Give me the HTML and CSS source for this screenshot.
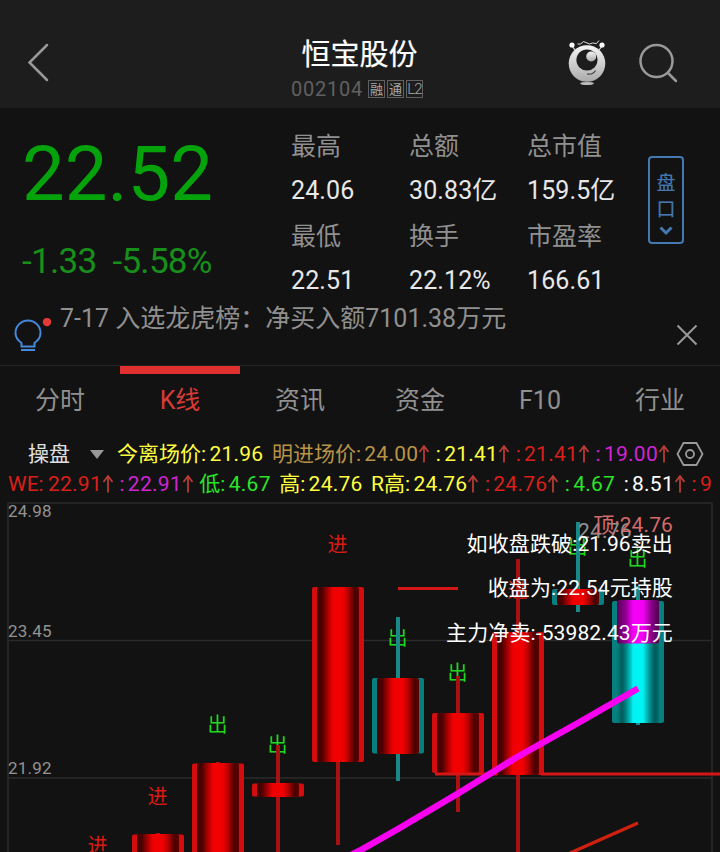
FILE: index.html
```html
<!DOCTYPE html>
<html lang="zh-CN">
<head>
<meta charset="utf-8">
<title>恒宝股份</title>
<link rel="stylesheet" href="styles.css">
</head>
<body>
<svg width="0" height="0" class="defs"><symbol id="up" viewBox="0 0 12 18"><path d="M6 17.500V1M1.500 7 6 1l4.500 6"/></symbol></svg>
<header class="top">
  <svg class="back" width="24" height="42" viewBox="0 0 24 42"><path d="M21 3 3.500 20.500 21 38" /></svg>
  <div class="heading">
    <h1>恒宝股份</h1>
    <div class="code"><span>002104</span><i>融</i><i>通</i><i class="lv">L2</i></div>
  </div>
  <div class="actions">
    <svg width="40" height="48" viewBox="0 0 40 48">
      <defs><linearGradient id="metal" x2="0" y2="1"><stop stop-color="#f5f5f5"/><stop offset="1" stop-color="#aaa"/></linearGradient></defs>
      <path d="M5 6l3 4M35 6l-3 4" stroke="#ddd" stroke-width="1.200"/>
      <circle cx="5" cy="5" r="2.600" fill="#fff"/><circle cx="35" cy="5" r="2.600" fill="#fff"/>
      <path d="M10.500 4h3l3-2.500 6 2.500 3-1 4 .5 2.500-3" fill="none" stroke="#ddd" stroke-width="1"/>
      <circle cx="20" cy="23.500" r="18.300" fill="url(#metal)"/>
      <circle cx="20" cy="20" r="10.600" fill="#1d1d1d"/><circle cx="24.200" cy="16.500" r="5" fill="url(#metal)"/>
      <path d="M20 34q6 1 8.500-3.500" fill="none" stroke="#444" stroke-width="1.200"/>
      <ellipse cx="20" cy="43.500" rx="6.800" ry="1.600" fill="#bbb"/>
    </svg>
    <svg class="search" width="40" height="40" viewBox="0 0 40 40"><circle cx="18.500" cy="18" r="16"/><path d="M30 30l8 8"/></svg>
  </div>
</header>
<section class="quote">
  <div class="price"><strong>22.52</strong><p><span>-1.33</span><span>-5.58%</span></p></div>
  <div class="stats">
    <span>最高</span><span>总额</span><span>总市值</span>
    <b>24.06</b><b>30.83亿</b><b>159.5亿</b>
    <span>最低</span><span>换手</span><span>市盈率</span>
    <b>22.51</b><b>22.12%</b><b>166.61</b>
  </div>
  <div class="depth"><span>盘</span><span>口</span><svg width="14" height="10" viewBox="0 0 14 10"><path d="M1.500 1.500 7 7l5.500-5.500"/></svg></div>
</section>
<section class="notice">
  <svg class="bulb" width="40" height="36" viewBox="0 0 40 36">
    <path d="M8.500 28.500V25C5 22.500 2.500 19.500 2.500 15a12.500 12.500 0 0 1 25 0c0 4.500-2.500 7.500-6 10v3.500ZM8 32h14"/>
    <circle cx="34" cy="4" r="4.200"/>
  </svg>
  <p>7-17 入选龙虎榜：净买入额7101.38万元</p>
  <svg class="close" width="22" height="22" viewBox="0 0 22 22"><path d="M1.500 1.500l19 19M20.500 1.500l-19 19"/></svg>
</section>
<nav class="tabs"><a>分时</a><a class="on">K线</a><a>资讯</a><a>资金</a><a>F10</a><a>行业</a></nav>
<section class="ind">
  <div class="row first">
    <span class="pick">操盘<svg width="14" height="9" viewBox="0 0 14 9"><path d="M0 0h14L7 9z"/></svg></span>
    <span class="item plain yellow"><em>今离场价:</em>21.96</span>
    <span class="item gold"><em>明进场价:</em>24.00<svg class="up"><use href="#up"/></svg></span>
    <span class="item yellow"><em>:</em>21.41<svg class="up"><use href="#up"/></svg></span>
    <span class="item red"><em>:</em>21.41<svg class="up"><use href="#up"/></svg></span>
    <span class="item pink"><em>:</em>19.00<svg class="up"><use href="#up"/></svg></span>
    <svg class="gear" width="28" height="26" viewBox="0 0 28 26"><path d="M7.500 2h13L26.500 13l-6 11h-13L1.500 13z"/><circle cx="14" cy="13" r="4"/></svg>
  </div>
  <div class="row second">
    <span class="item red"><em>WE:</em>22.91<svg class="up"><use href="#up"/></svg></span>
    <span class="item pink"><em>:</em>22.91<svg class="up"><use href="#up"/></svg></span>
    <span class="item plain green"><em>低:</em>4.67</span>
    <span class="item plain yellow"><em>高:</em>24.76</span>
    <span class="item yellow"><em>R高:</em>24.76<svg class="up"><use href="#up"/></svg></span>
    <span class="item red"><em>:</em>24.76<svg class="up"><use href="#up"/></svg></span>
    <span class="item plain green"><em>:</em>4.67</span>
    <span class="item white"><em>:</em>8.51<svg class="up"><use href="#up"/></svg></span>
    <span class="item red"><em>:</em>9</span>
  </div>
</section>
<svg class="chart" width="720" height="352" viewBox="0 500 720 352">
  <defs>
    <linearGradient id="r"><stop stop-color="#420000"/><stop offset=".12" stop-color="#4c0000"/><stop offset=".2" stop-color="#850000"/><stop offset=".31" stop-color="#c80000"/><stop offset=".38" stop-color="#f00000"/><stop offset=".62" stop-color="#f00000"/><stop offset=".74" stop-color="#b60000"/><stop offset=".9" stop-color="#480000"/><stop offset="1" stop-color="#600000"/></linearGradient>
    <linearGradient id="c"><stop stop-color="#008080"/><stop offset=".12" stop-color="#005a5a"/><stop offset=".22" stop-color="#008585"/><stop offset=".34" stop-color="#00d0d0"/><stop offset=".38" stop-color="#00f4f4"/><stop offset=".62" stop-color="#00f4f4"/><stop offset=".75" stop-color="#00a0a0"/><stop offset=".9" stop-color="#005858"/><stop offset="1" stop-color="#007070"/></linearGradient>
    <linearGradient id="m"><stop stop-color="#5a005a"/><stop offset=".2" stop-color="#8d008d"/><stop offset=".38" stop-color="#f400f4"/><stop offset=".62" stop-color="#f400f4"/><stop offset=".82" stop-color="#880088"/><stop offset="1" stop-color="#500050"/></linearGradient>
  </defs>
  <g class="grid"><path d="M8 870V503H712V870"/><path d="M8 640.500H712M8 778H712"/></g>
  <g class="axis"><text x="8" y="517">24.98</text><text x="8" y="637">23.45</text><text x="8" y="774">21.92</text></g>
  <g class="out"><text x="217.500" y="732">出</text><text x="277.500" y="752">出</text><text x="397.500" y="645">出</text><text x="457.500" y="680">出</text><text x="577.500" y="554">出</text><text x="637.500" y="566">出</text></g>
  <g class="in"><text x="337.500" y="552">进</text><text x="157.500" y="804">进</text><text x="97.500" y="853">进</text><text x="517.500" y="598">进</text></g>
  <g class="wick"><path d="M278 745V870M338 760V845M458 676V812M518 559V870M158 833v4M218 762v4"/><path class="teal" d="M398 617V781M578 522V612M638 586V725"/></g>
  <g class="side">
    <rect x="132" y="834.500" width="52" height="40" rx="2"/><rect x="192" y="763.500" width="52" height="100" rx="2"/><rect x="252" y="783.500" width="52" height="13" rx="2"/><rect x="312" y="587" width="52" height="175" rx="2"/><rect x="432" y="713" width="52" height="60" rx="2"/><rect x="492" y="632" width="52" height="143" rx="2"/>
    <rect class="teal" x="372" y="678" width="52" height="75.500" rx="2"/><rect class="teal" x="552" y="589" width="52" height="16" rx="2"/><rect class="teal" x="612" y="601" width="52" height="122" rx="2"/>
  </g>
  <g fill="url(#r)">
    <rect x="137" y="834" width="42" height="40" rx="2"/><rect x="197" y="763" width="42" height="100" rx="2"/><rect x="257" y="783" width="42" height="14" rx="2"/><rect x="317" y="587" width="42" height="175" rx="2"/><rect x="377" y="678" width="42" height="76" rx="2"/><rect x="437" y="713" width="42" height="60" rx="2"/><rect x="497" y="632" width="42" height="143" rx="2"/><rect x="557" y="589" width="42" height="16" rx="2"/>
  </g>
  <rect x="617" y="601" width="42" height="122" fill="url(#c)"/><rect x="617" y="600" width="42" height="43.500" rx="2" fill="url(#m)"/>
  <path class="level" d="M398 588.500H458M435 774H497M541 774H720"/>
  <path class="trend" d="M345 858 360 850.500 398 829 458 793.500 518 756.500 578 723 638 688.500"/>
  <path class="fast" d="M566 855 578 849.500 638 823"/>
  <text class="high" x="578" y="538">24.76</text>
  <g class="notes"><text class="peak" x="673" y="532">顶:24.76</text><text x="673" y="551">如收盘跌破:21.96卖出</text><text x="673" y="595">收盘为:22.54元持股</text><text x="673" y="640">主力净卖:-53982.43万元</text></g>
</svg>
</body>
</html>
```
FILE: styles.css
```css
* { box-sizing: border-box; }
body { margin: 0; width: 720px; height: 852px; overflow: hidden; background: #121212; color: #909090; font: 25px/30px Roboto, "Noto Sans CJK SC", sans-serif; }
h1, p { margin: 0; }
svg { display: block; flex: none; }
.top { height: 108px; background: #1d1d1d; display: grid; grid-template-columns: 240px 234px 246px; }
.back { margin: 42px 0 0 26px; fill: none; stroke: #999; stroke-width: 2.5; stroke-linecap: round; }
.heading { padding-top: 38px; text-align: center; }
h1 { font-size: 29px; line-height: 34px; font-weight: 400; color: #fff; padding-left: 5px; -webkit-text-stroke: .2px #fff; }
.code { display: flex; justify-content: center; align-items: center; gap: 2px; height: 34px; font-size: 20px; color: #606060; }
.code span { margin-right: 3px; letter-spacing: .75px; }
.code i { width: 17px; height: 18px; border: 1px solid #606060; font: 13px/16px "Noto Sans CJK SC", sans-serif; color: #aaa; text-align: center; }
.code .lv { font: 300 15px/17px Roboto, sans-serif; letter-spacing: -.8px; }
.actions { display: flex; gap: 31px; padding: 40px 0 0 93px; }
.search { fill: none; stroke: #999; stroke-width: 2.5; margin-top: 3px; stroke-linecap: round; }
.quote { display: grid; grid-template-columns: 291px 357px 36px; height: 195px; padding-top: 16px; }
.price { padding: 8px 0 0 22px; color: #05a30b; }
.price strong { display: block; font-size: 76px; line-height: 84px; font-weight: 400; }
.price p { font-size: 35px; line-height: 40px; padding-top: 26px; display: flex; gap: 16px; letter-spacing: -.7px; color: #17901b; }
.stats { display: grid; grid-template-columns: 118px 118px 121px; grid-template-rows: repeat(4, 45px); align-items: center; font-size: 25px; }
.stats b { font-weight: 400; color: #e8e8e8; white-space: nowrap; letter-spacing: .1px; padding-bottom: 2px; }
.depth { margin-top: 32px; height: 88px; border: 2px solid #4478b0; border-radius: 4px; color: #4478b0; font-size: 19px; line-height: 26px; display: flex; flex-direction: column; align-items: center; padding-top: 13px; -webkit-text-stroke: .2px #4478b0; }
.depth svg { margin-top: 3px; fill: none; stroke: #4478b0; stroke-width: 3; }
.notice { height: 63px; border-bottom: 1px solid #232323; display: flex; }
.bulb { margin: 15px 7px 0 13px; fill: none; stroke: #4688dc; stroke-width: 2; }
.bulb circle { fill: #e53935; stroke: none; }
.notice p { padding-top: 1px; width: 616px; }
.close { stroke: #999; stroke-width: 2; margin-top: 21px; }
.tabs { display: grid; grid-template-columns: repeat(6, 120px); height: 73px; }
.tabs a { text-align: center; padding-top: 20px; }
.tabs .on { color: #d93a35; border-top: 8px solid #e03030; padding-top: 12px; }
.ind { height: 61px; font-size: 21px; overflow: hidden; }
.row { height: 30px; display: flex; align-items: center; padding-left: 8px; gap: 6px; white-space: nowrap; letter-spacing: .25px; }
.first { padding-left: 28px; }
.pick { display: flex; align-items: center; color: #e0e0e0; width: 83px; gap: 20px; letter-spacing: 0; }
.pick svg { fill: #999; }
.item { display: flex; align-items: center; }
.item em { font-style: normal; margin-right: 3.3px; letter-spacing: 0; }
.second .item:first-child em { margin-right: 4.3px; }
.plain { margin-right: 2.5px; }
.up { width: 12px; height: 18px; fill: none; stroke: #b63c35; stroke-width: 1.8; margin-right: -.5px; }
.defs { position: absolute; }
.yellow { color: #ffff40; } .gold { color: #b99346; } .red { color: #d91f19; } .pink { color: #cf24d3; } .green { color: #29e529; } .white { color: #fff; }
.gear { fill: none; stroke: #999; stroke-width: 1.8; margin-left: 1px; }
.chart { font-family: Roboto, "Noto Sans CJK SC", sans-serif; }
.grid { fill: none; stroke: #2b2b2b; stroke-width: 1.5; }
.axis { fill: #929292; font-size: 17px; letter-spacing: .2px; }
.in, .out { font-size: 20px; text-anchor: middle; }
.in { fill: #d91b14; } .out { fill: #20d820; }
.wick { fill: none; stroke: #a51212; stroke-width: 4; }
.side { fill: #d30d0d; }
.side .teal { fill: #087f7f; } .wick .teal { stroke: #188888; }
.level { fill: none; stroke: #d51616; stroke-width: 3; }
.trend { fill: none; stroke: #f800f0; stroke-width: 6.5; }
.fast { fill: none; stroke: #cf2010; stroke-width: 3.5; }
.high { fill: #929292; font-size: 21px; letter-spacing: .2px; }
.notes { fill: #fff; font-size: 21px; text-anchor: end; letter-spacing: .12px; }
.notes .peak { fill: #d56a6a; }
```
